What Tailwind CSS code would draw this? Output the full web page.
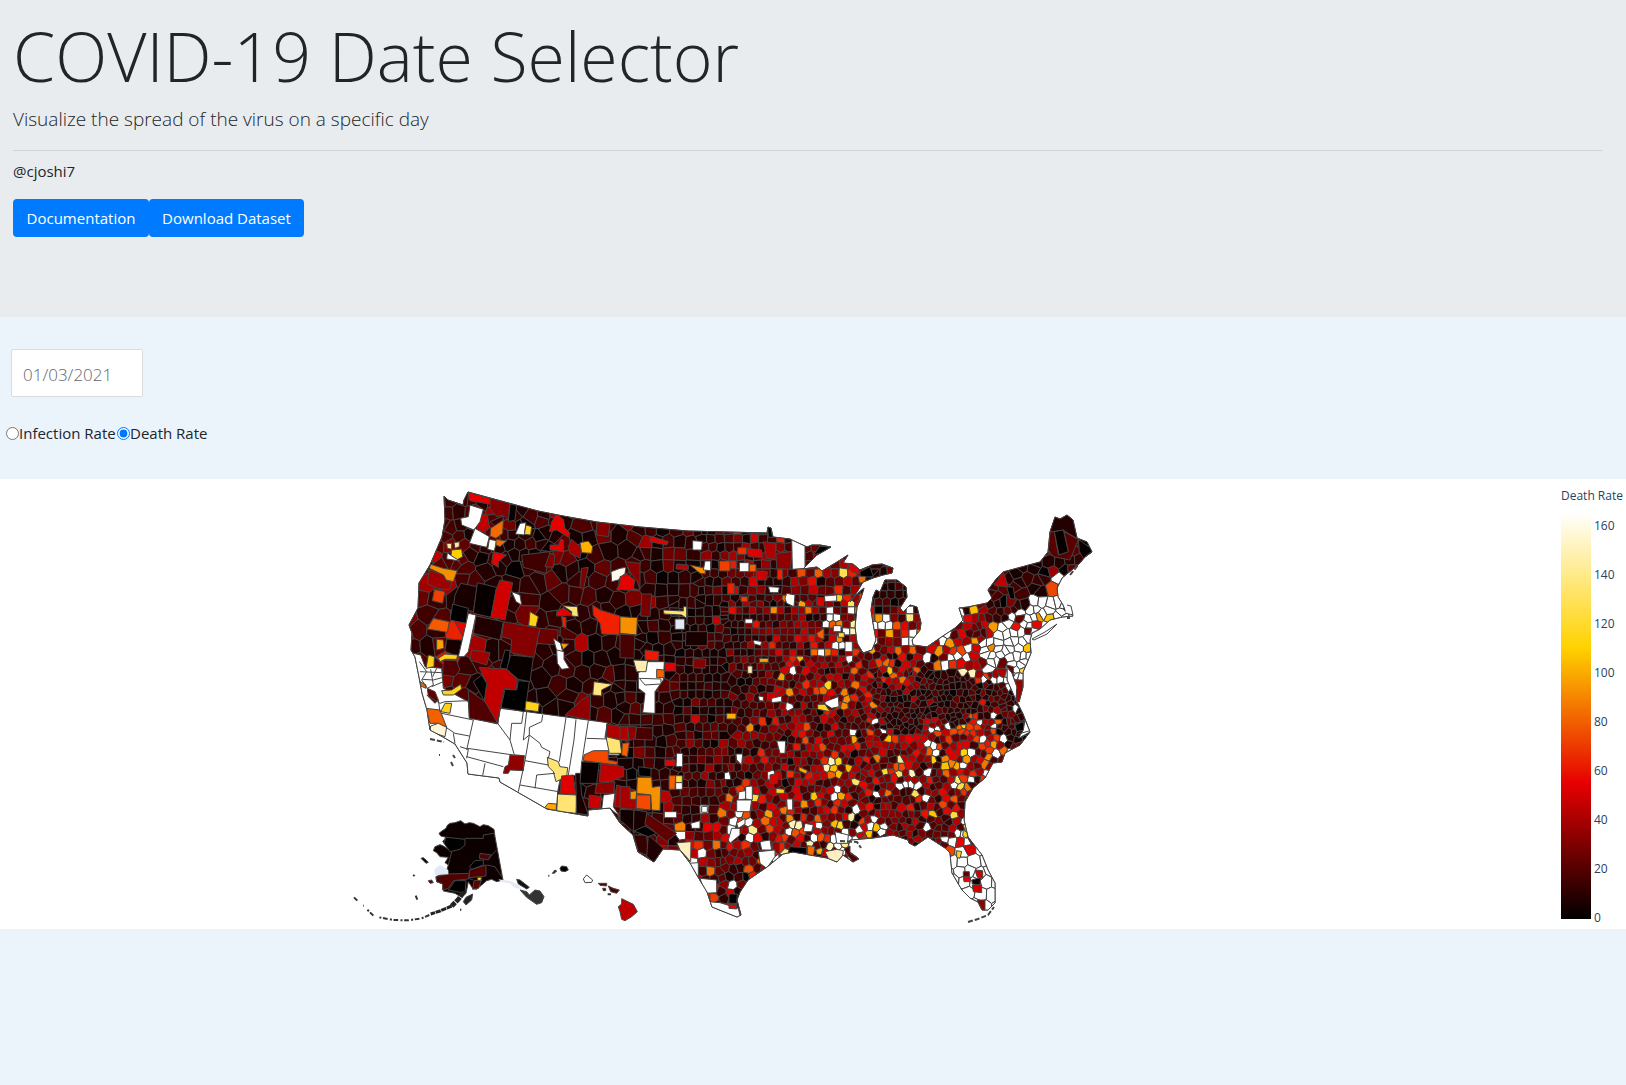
<!DOCTYPE html>
<html lang="en">
<head>
<meta charset="utf-8">
<title>COVID-19 Date Selector</title>
<script src="https://cdn.jsdelivr.net/npm/@tailwindcss/browser@4"></script>
</head>
<body class="min-h-screen bg-[#ebf3fb] font-['Open_Sans',sans-serif] text-base text-[#212529]">
<header class="h-[317px] bg-[#e9ecef] pt-3 pr-6 pl-[13px]">
  <h1 class="text-[68px] leading-[88px] font-light whitespace-nowrap">COVID-19 Date Selector</h1>
  <p class="mt-1 text-[19px] leading-[30px] font-light">Visualize the spread of the virus on a specific day</p>
  <hr class="mt-4 border-t border-[#cfd2d5]">
  <p class="mt-2 text-[15px] leading-6">@cjoshi7</p>
  <div class="mt-4 flex">
    <button type="button" class="h-[38px] w-[136px] rounded bg-[#007bff] text-[15px] whitespace-nowrap text-white">Documentation</button>
    <button type="button" class="h-[38px] w-[155px] rounded bg-[#007bff] text-[15px] whitespace-nowrap text-white">Download Dataset</button>
  </div>
</header>
<main>
  <section class="h-[162px] pt-8" aria-label="Filters">
    <input type="text" aria-label="Date" value="01/03/2021" class="ml-[11px] block h-12 w-[132px] rounded-xs border border-[#dbdbdb] bg-white px-[11px] pt-0.5 text-[17px] font-light text-[#666]">
    <div class="mt-6 ml-1.5 flex h-6 items-center text-[15px]">
      <input id="infection" name="rate" type="radio" class="size-[13px]"><label for="infection" class="w-[98px] whitespace-nowrap">Infection Rate</label>
      <input id="death" name="rate" type="radio" checked class="size-[13px]"><label for="death" class="whitespace-nowrap">Death Rate</label>
    </div>
  </section>
  <section class="flex h-[450px] bg-white" aria-label="Death rate by county">
    <div class="flex flex-1 justify-center">
      <svg id="map" class="h-[450px] w-[760px]" viewBox="343 479 760 450" role="img" aria-label="Death rate in the counties of the United States" stroke="#444" stroke-linejoin="round"></svg>
    </div>
    <div class="flex w-[180px] flex-col items-end pt-[7px] text-xs text-[#2a3f5f]">
      <div class="w-[65px] leading-5 whitespace-nowrap">Death Rate</div>
      <div class="mt-1 flex w-[65px] pt-0.5">
        <div class="h-[407px] w-[30px] bg-[linear-gradient(to_top,#000,#e60000_33.3%,#ffd200_66.7%,#fff)]"></div>
        <ol class="mt-2 ml-[3px] flex h-[404px] flex-col justify-between leading-3">
          <li>160</li><li>140</li><li>120</li><li>100</li><li>80</li><li>60</li><li>40</li><li>20</li><li>0</li>
        </ol>
      </div>
    </div>
  </section>
</main>
<script>
const NS = 'http://www.w3.org/2000/svg';
const map = document.getElementById('map');
let seed = 20210103;
const rnd = () => { seed = (seed * 1664525 + 1013904223) >>> 0; return seed / 4294967296; };
function add(parent, tag, attrs) {
  const e = document.createElementNS(NS, tag);
  for (const k in attrs) e.setAttribute(k, attrs[k]);
  parent.appendChild(e);
  return e;
}
const outline = "444,496 448,500 463,505 464,500 468,492 490,498 538,511 563,516 597,522 640,527 688,531 767,533 768,527 771,528 773,537 790,539 794,541 807,547 812,545 820,545 831,547 817,555 803,569 817,567 822,571 837,562 848,555 843,563 853,564 860,570 872,565 882,564 893,568 892,573 883,575 873,578 863,582 857,592 850,602 857,594 864,588 861,598 857,607 855,627 857,643 863,653 872,650 876,640 873,623 871,610 873,597 876,590 880,592 885,580 897,580 906,587 907,597 900,608 903,612 910,605 917,607 921,623 920,630 912,640 913,645 927,647 940,638 955,628 963,620 959,608 968,607 987,603 992,598 988,590 997,578 1003,572 1040,562 1048,552 1050,532 1055,517 1060,519 1067,515 1073,520 1077,538 1087,542 1092,552 1085,557 1078,565 1068,573 1062,578 1057,588 1058,597 1063,605 1066,613 1071,613 1073,616 1062,617 1050,620 1040,629 1032,633 1030,640 1031,653 1027,663 1023,672 1023,687 1019,702 1016,700 1017,687 1012,673 1007,667 1007,680 1015,698 1023,714 1030,732 1020,745 1005,753 1002,762 993,763 985,778 973,788 965,802 964,820 968,837 982,855 988,870 995,883 995,903 988,910 982,910 978,902 970,898 962,890 952,873 950,853 945,848 928,837 915,846 909,843 908,840 893,835 873,838 850,840 847,850 858,858 853,862 843,855 837,862 827,858 810,855 793,852 783,854 767,867 748,880 740,892 737,900 741,915 737,917 712,907 707,892 698,877 690,863 680,850 663,849 654,862 638,852 633,835 620,823 610,808 588,810 588,816 547,809 500,782 499,778 468,774 467,763 455,744 443,737 430,730 427,710 422,693 419,677 415,657 411,650 412,633 409,625 418,608 419,583 430,565 442,537 445,520";
const defs = add(map, 'defs', {});
add(add(defs, 'clipPath', { id: 'land' }), 'polygon', { points: outline });
add(map, 'polygon', { points: outline, fill: '#200000' });
const land = add(map, 'g', { 'clip-path': 'url(#land)' });

// County seeds: [x0, x1, y0, y1, spacing, jitter]; the first band that holds a point wins
const bands = [
  [868, 1015, 672, 728, 5.8, .8], [1000, 1100, 505, 600, 10, .8], [945, 1000, 845, 920, 11, .5],
  [868, 925, 575, 645, 7.8, .15], [980, 1080, 600, 672, 7.4, .8], [925, 1100, 560, 672, 7.8, .6],
  [860, 1100, 640, 850, 6.8, .65], [780, 870, 660, 870, 7, .5], [725, 870, 600, 670, 7, .2],
  [700, 870, 500, 605, 8.6, .3], [675, 730, 600, 780, 8.2, .2], [720, 800, 670, 930, 7.8, .45],
  [675, 800, 770, 930, 8.8, .25], [640, 710, 500, 680, 12, .3], [620, 690, 670, 930, 11, .25],
  [570, 645, 500, 930, 15, .5], [400, 580, 485, 560, 11, .8], [400, 580, 560, 830, 16, .7]
];
const within = (b, x, y) => x >= b[0] && x < b[1] && y >= b[2] && y < b[3];
const pts = [];
bands.forEach((b, i) => {
  const grid = b[5] <= .3;
  let row = 0;
  for (let y = b[2] + b[4] / 2; y < b[3]; y += b[4], row++) {
    const shift = grid ? Math.floor(row / 3) * .37 % 1 : row % 2 ? .7 : .3;
    for (let x = b[0] + b[4] * shift; x < b[1]; x += b[4]) {
      const px = x + (rnd() - .5) * b[4] * b[5], py = y + (rnd() - .5) * b[4] * b[5] * (grid ? .5 : 1);
      if (!bands.slice(0, i).some(q => within(q, px, py))) pts.push([px, py, b[4]]);
    }
  }
});
// Regional rates: [x, y, mean, share above the scale]
const regions = [
  [460, 510, 24, 0], [440, 590, 22, 0], [500, 570, 10, 0], [550, 620, 16, 0], [600, 560, 8, 0], [560, 530, 12, 0],
  [570, 680, 9, 0], [660, 540, 12, 0], [700, 570, 9, 0], [660, 640, 6, 0], [700, 680, 9, 0], [640, 740, 9, 0],
  [740, 560, 24, 0], [780, 540, 34, 0], [770, 590, 26, .01], [820, 580, 38, .01], [840, 565, 36, 0],
  [850, 610, 64, .12], [850, 640, 72, .2], [780, 630, 32, .02], [820, 650, 42, .03], [740, 660, 14, .01],
  [800, 680, 36, .03], [840, 690, 44, .03], [720, 720, 15, 0], [760, 740, 30, .01], [700, 790, 16, .01],
  [720, 770, 17, .01], [770, 780, 36, .02], [745, 800, 55, .12], [720, 840, 34, .02], [750, 860, 38, .03], [735, 835, 42, .08],
  [810, 750, 38, .02], [820, 800, 48, .05], [800, 850, 60, .1], [840, 840, 75, .16], [850, 770, 50, .03], [890, 750, 46, .06],
  [880, 790, 36, .05], [900, 780, 56, .1], [910, 810, 26, .01], [930, 830, 26, .02], [950, 800, 38, .04], [960, 770, 62, .08], [940, 745, 55, .15],
  [980, 750, 64, .06], [990, 735, 62, .08], [1015, 720, 14, .03], [870, 710, 30, .02], [900, 710, 12, 0], [950, 700, 12, 0],
  [990, 705, 16, .01], [925, 690, 18, .01], [890, 575, 8, 0], [890, 600, 10, 0], [895, 622, 62, .35], [912, 620, 68, .35],
  [880, 655, 58, .12], [900, 675, 46, .08], [935, 655, 70, .18], [950, 645, 85, .3], [965, 630, 28, .02], [980, 615, 34, .04],
  [985, 630, 55, .1], [970, 655, 85, .18], [995, 650, 90, .88], [1010, 640, 90, .94], [1025, 620, 70, .6], [1050, 605, 90, .8], [1010, 660, 80, .8],
  [1010, 600, 16, .05], [1015, 580, 12, 0], [1035, 580, 9, 0], [1050, 590, 60, .3], [1060, 550, 14, 0], [970, 860, 80, .97],
  [970, 885, 80, .97], [970, 840, 70, .45], [870, 830, 60, .4], [890, 815, 28, .03], [940, 680, 14, 0]
];
const stops = [[0, 0, 0], [230, 0, 0], [255, 210, 0], [255, 255, 255]];
function color(v) {
  const t = Math.min(v / 165, 1) * 3, i = Math.min(Math.floor(t), 2), f = t - i;
  return 'rgb(' + stops[i].map((c, k) => Math.round(c + (stops[i + 1][k] - c) * f)).join() + ')';
}
function rate(x, y) {
  let best = 1e9, r;
  for (const q of regions) {
    const d = Math.hypot(q[0] - x, q[1] - y) + rnd() * 10;
    if (d < best) { best = d; r = q; }
  }
  if (rnd() < r[3]) return 165;
  return Math.min((-Math.log(1 - rnd()) * .6 + rnd() * .5) * r[2] + rnd() * 6, 150);
}
// Voronoi cell of each seed, cut from a square by the bisectors with its neighbours
for (const p of pts) {
  const s = p[2] * 1.6;
  let poly = [[p[0] - s, p[1] - s], [p[0] + s, p[1] - s], [p[0] + s, p[1] + s], [p[0] - s, p[1] + s]];
  for (const q of pts) {
    if (q === p || Math.abs(q[0] - p[0]) > s * 2 || Math.abs(q[1] - p[1]) > s * 2) continue;
    const nx = q[0] - p[0], ny = q[1] - p[1], c = (q[0] * q[0] + q[1] * q[1] - p[0] * p[0] - p[1] * p[1]) / 2;
    const out = [];
    for (let i = 0; i < poly.length; i++) {
      const a = poly[i], b = poly[(i + 1) % poly.length];
      const da = a[0] * nx + a[1] * ny - c, db = b[0] * nx + b[1] * ny - c;
      if (da <= 0) out.push(a);
      if ((da < 0) !== (db < 0)) { const t = da / (da - db); out.push([a[0] + (b[0] - a[0]) * t, a[1] + (b[1] - a[1]) * t]); }
    }
    poly = out;
  }
  add(land, 'polygon', { points: poly.map(v => v[0].toFixed(1) + ',' + v[1].toFixed(1)).join(' '), fill: color(rate(p[0], p[1])) });
}
// Larger counties, in sheets of thirds of a pixel: "fill|points"
function sheet(parent, x, y, list) {
  const g = add(parent, 'g', { transform: `translate(${x} ${y}) scale(.33333)`, 'stroke-width': 3 });
  list.trim().split('\n').forEach(l => { const [fill, points] = l.trim().split('|'); add(g, 'polygon', { fill, points }); });
  return g;
}
sheet(land, 390, 480, `
#e60000|235,37 300,55 298,72 240,62
#850000|300,55 360,70 355,120 340,105 320,110 300,85
#080000|360,72 380,76 375,120 355,125
#fff|240,75 280,88 270,125 252,150 215,135 212,115 235,110
#fff|255,145 298,170 290,202 238,190
#fffaf0|298,178 320,182 313,213 293,208
#300000|300,125 340,108 338,122 315,138
#f56a00|340,120 338,160 318,175 300,168 302,145
#f56a00|318,178 350,183 330,200 318,195
#fff|390,130 408,128 403,165 376,162
#ffd21a|408,135 425,140 422,165 403,163
#e60000|500,103 520,118 525,145 540,160 535,172 500,150 478,155 485,125
#e60000|480,195 505,195 512,178 520,180 520,215 480,210
#a80000|545,178 575,205 570,235 540,220 535,200
#ffb000|570,188 595,183 608,200 605,220 575,218
#850000|620,125 660,130 655,170 620,165
#850000|705,245 750,250 750,330 740,300 725,285
#fffaf0|663,275 690,265 708,262 705,280 685,300 665,305
#e60000|690,290 710,282 735,300 730,325 745,333 680,328 690,310
#f79000|122,253 160,265 202,272 190,305 168,300 160,285 118,265
#a00000|118,270 160,285 168,300 185,310 178,330 140,325 112,310
#f04000|133,328 165,335 158,370 127,362
#180000|212,310 262,320 250,395 190,380 195,345
#080000|262,308 320,322 303,412 250,400
#d00000|330,300 368,308 345,420 303,412 318,330
#000|188,372 235,385 228,430 180,420
#400000|395,225 480,215 468,280 400,262
#800000|480,220 495,225 490,262 465,260
#e60000|310,215 350,225 325,245 325,262 305,250
#800000|575,265 595,262 580,330 570,320
#200000|258,408 340,425 330,480 250,460
#850000|342,425 450,445 432,533 362,518 365,478 335,470
#6a0000|450,445 505,450 500,495 440,490
#fff|235,400 258,405 235,515 222,530 205,530
#f55a00|130,415 178,425 172,457 112,447
#ffa000|140,478 160,480 162,505 140,510
#ffe9a0|170,190 185,190 185,208 172,205
#ffe9a0|192,188 208,185 208,200 195,205
#ffd000|185,210 215,207 218,230 200,240 183,228
#fff|172,218 185,228 210,243 170,237
#fff|365,335 390,345 395,375 378,365
#ffd21a|420,395 445,410 438,440 416,437
#e60000|500,395 520,383 550,405 500,408
#ffe373|518,377 562,380 565,410 545,408 545,395
#f02000|515,410 528,412 528,443 518,440
#f02000|608,375 630,390 690,408 688,465 635,462 630,430 610,405
#f79000|690,410 742,413 740,465 690,460
#fff|490,475 512,490 520,525 505,530
#ffa000|512,490 537,492 520,508`);
const sw = sheet(land, 390, 640, `
#fff|60,38 92,45 105,80 155,85 160,145 235,185 238,233 323,252 330,205 410,215 652,248 645,292 690,345 585,345 575,400 540,410 510,420 503,455 500,515 460,505 320,430 230,410 190,320 115,275 95,180 80,100
#fff|500,30 522,35 522,58 538,85 515,88 502,70
#a00000|245,30 300,38 290,75 240,60
#000|345,30 360,32 355,88 330,84
#090000|362,45 430,52 420,125 385,118 350,88
#500000|160,60 200,62 210,90 195,110 158,105
#c00000|268,82 350,88 382,118 378,150 342,145 323,250 283,185 290,130
#500000|235,150 285,185 323,250 238,235
#000|250,125 275,105 290,130 283,182
#000|345,148 380,150 385,122 418,125 405,215 333,203
#900000|525,225 575,180 602,165 600,240
#ffd21a|408,183 448,190 445,215 405,210
#ffe580|612,125 668,133 635,150 635,168 608,165
#ffecb0|732,60 772,62 768,97 740,95
#ffd21a|145,55 165,42 203,45 200,58 165,58 150,65
#ffd21a|115,45 133,50 132,80 108,85
#ffd21a|155,152 185,150 212,133 215,147 190,165 160,165
#ffd21a|165,190 185,190 180,220 152,215
#f56000|108,205 150,210 170,262 145,250 120,250
#fff5d8|122,258 145,250 170,262 165,290 120,275
#600000|112,145 135,155 145,180 135,190 115,170
#f56000|90,125 108,135 108,145 92,138
#900000|360,345 403,347 400,392 360,390 355,400 340,400 345,380 355,375
#ffe373|472,352 505,365 510,380 533,383 530,410 498,425 490,395 475,380
#e00000|515,408 550,405 557,465 510,460
#ffe373|503,462 560,465 558,520 500,515
#ffa800|475,490 500,492 498,512 462,505
#180000|557,400 570,400 575,465 595,525 560,520
#080000|575,365 628,368 620,430 570,430
#f34a00|582,345 610,332 655,332 655,360 683,365 680,375 580,362
#b00000|650,252 710,262 715,305 650,290
#ffe373|648,290 690,300 695,340 658,340
#f56000|697,310 718,308 712,350 695,345
#c00000|632,370 700,380 700,410 660,425 628,425
#900000|620,430 675,425 670,460 615,460
#c80000|598,465 635,470 630,508 595,503
#fff|640,465 675,460 670,500 690,530 660,505 635,508
#a80000|680,435 735,450 730,505 675,500
#f79000|745,412 780,412 780,460 720,480 720,455 742,455
#f34a00|740,463 780,463 780,510 738,508`);
add(sw, 'path', { fill: 'none', d: 'M155,220L250,240L230,330M168,262L195,280L238,288M232,325L370,345M330,205L323,250L360,300L373,345L403,347M400,215L395,250L365,250L360,300M230,350L340,380M285,370L278,407M410,215L400,300L418,285L405,362L385,455M458,225L455,245L418,262V285L450,310L455,322L480,335L475,355M528,233L508,365M558,238L552,300L535,405M595,242L575,370M590,295L650,297M405,362L475,375M435,445L440,405L495,400M390,435L505,455M90,95L155,98M97,118L130,120L160,112M125,140L160,125M110,165L150,190L165,185L235,182M88,65L110,95L95,120L112,145L130,135L122,88M140,85L128,110M145,180L150,215M190,280L195,310M210,320L235,328L230,355' });
sheet(land, 620, 500, `
#000|443,82 453,83 458,112 445,112
#fff|218,122 247,124 245,150 218,150
#fff|515,115 555,135 555,205 517,208
#000|580,165 600,138 632,142 600,160
#b00000|430,125 467,130 465,178 440,175
#900000|468,160 515,155 512,208 470,205
#f79000|210,195 258,205 255,222 240,220
#fff|255,183 272,183 272,212 250,210
#f04000|298,183 330,183 330,213 298,213
#fff|358,188 387,188 387,215 358,215
#f56000|388,193 408,193 408,215 388,215
#f03000|353,143 380,143 380,163 353,163
#e00000|380,145 425,150 425,172 385,170
#e00000|90,108 145,125 140,135 90,125
#c00000|170,192 205,195 205,208 168,207
#ffe373|130,330 190,333 190,320 200,320 200,355 185,345 132,342
#e2e9f5|165,357 194,357 194,388 165,388
#780000|65,282 95,282 90,350 62,348
#480000|0,403 45,405 42,475 0,473
#f01800|75,450 117,455 115,482 75,480
#fff|83,485 133,485 130,540 105,575 105,640 68,638 75,580 55,565 55,520
#fff|58,535 123,537 123,552 75,555
#ffecb0|40,480 83,482 78,515 50,515
#f56000|110,508 133,510 133,533 110,533
#e60000|135,488 167,490 165,513 135,513
#850000|222,475 258,478 255,505 220,503
#180000|198,395 262,395 262,437 196,437
#f02000|323,250 343,250 343,282 323,282
#d00000|408,213 442,215 440,240 408,240
#f04000|363,290 382,290 382,305 363,305
#f02000|472,208 488,208 488,238 472,238
#fff|445,260 478,262 475,278 450,278
#fff|500,280 525,285 522,320 500,310 495,295
#fff|613,288 650,285 650,303 615,305
#e00000|590,293 612,293 610,318 590,315
#f56000|590,400 612,385 612,418 595,412
#fff|375,357 398,357 398,370 375,370
#fff|400,420 425,425 422,437 402,432
#ffa000|418,475 445,475 445,487 418,487
#ffecb0|383,498 397,498 397,520 383,520
#ffb000|320,640 348,640 348,657 320,657
#fff|415,588 430,590 430,603 418,602
#fff|455,595 485,588 485,605 455,608
#fff|640,377 663,377 663,395 640,395
#ffd840|655,398 673,398 673,412 655,412
#fff|675,425 697,425 697,455 675,455
#fff|615,605 655,590 657,620 635,625 615,612
#ffd21a|593,613 615,613 630,635 593,628
#e00000|683,195 715,200 718,222 695,215`);
sheet(land, 620, 700, `
#fff|170,160 188,160 188,200 168,200
#e60000|135,180 165,180 165,197 135,197
#f56000|147,227 167,227 165,268 147,268
#ffd840|167,227 187,227 187,248 167,248
#fff|167,248 187,248 187,268 167,268
#b00000|0,80 22,80 25,120 0,118
#900000|22,80 50,80 45,115 28,122
#480000|50,82 98,84 98,120 45,118
#000|55,200 93,205 93,230 57,228
#f79000|52,232 95,232 97,262 122,258 120,332 95,330 92,285 50,280
#f34a00|50,285 92,285 92,330 48,325
#f79000|30,275 50,272 48,298 30,298
#a80000|0,260 30,260 30,298 48,300 48,328 0,325
#100000|0,328 42,330 40,395 0,360
#180000|42,330 80,335 78,378 40,400
#350000|80,405 40,405 55,455 85,468
#200000|85,405 130,445 103,490 80,468
#600000|80,340 170,400 140,425 110,400 75,372
#000|42,393 75,378 110,400 85,410
#ffefc0|170,428 213,425 212,485 180,450
#fff|212,370 240,362 240,385 215,385
#fff|133,335 170,335 170,353 133,353
#fff|245,319 262,319 262,337 245,337
#fff|240,535 290,540 290,578 255,580
#fff|205,490 235,488 235,528 220,520
#fff|265,605 300,608 355,625 362,655 315,645 270,630
#000|327,582 352,582 350,610 327,610
#e60000|327,613 350,613 350,627 327,625
#fff|357,275 377,272 377,297 354,300
#fff|377,260 397,258 397,300 377,297
#fff|350,300 395,300 390,335 350,335
#fff|350,370 375,355 375,372 355,385
#fff|335,385 360,385 360,405 330,430 325,420
#fff|470,123 497,123 495,160 480,160
#fff|348,162 368,162 365,195 350,180
#fff|500,297 518,297 518,330 502,330
#ffa800|537,200 563,212 558,222 537,212
#ffd21a|468,265 493,268 493,280 468,280
#fff|420,425 450,420 455,450 425,450
#fff|415,455 465,450 465,470 440,505 420,490
#000|508,440 560,443 560,465 505,462
#f56a00|563,437 585,440 580,468 562,464
#ffefc0|615,455 650,448 670,452 665,485 630,485
#fff|555,370 580,375 575,395 550,395
#fff|645,395 685,405 683,430 650,430
#e00000|450,225 472,220 472,250 450,250`);
sheet(land, 840, 500, `
#c00000|490,215 505,262 462,255
#000|500,260 520,262 525,298 510,295
#240000|645,45 680,40 700,60 715,118 685,100 670,90 640,95 625,100
#580000|630,95 643,95 655,165 685,155 672,95 690,105 715,118 690,180 640,170 625,150
#080000|643,95 670,90 685,155 657,165
#080000|715,118 760,150 730,175 718,155
#000|60,215 90,200 100,230 60,232
#600000|500,495 520,500 520,555 505,540
#a00000|525,540 550,540 545,610 525,600
#f56a00|55,228 78,230 75,250 58,248`);
sheet(land, 840, 700, `
#600000|370,515 388,515 388,530 370,530
#e60000|370,530 390,530 390,545 372,545
#d00000|405,510 428,512 428,535 412,532
#180000|395,540 422,533 420,555 397,552
#d00000|397,555 425,555 425,578 400,575
#900000|412,600 435,600 435,632 420,630
#080000|525,75 550,65 555,90 530,95
#fff|555,60 572,95 535,115 550,90
#ffd21a|350,452 365,455 360,475 350,472
#ffd21a|370,390 385,400 380,415 368,408`);
add(map, 'polygon', { points: outline, fill: 'none' });
// Islands, the Keys and the eastern capes
add(map, 'path', { fill: '#fff', d: 'M1032,639L1045,632L1057,624L1047,634L1034,640ZM1065,613L1073,615L1071,606L1067,605M1018,734L1029,731' });
add(map, 'path', { fill: 'none', 'stroke-width': 2, 'stroke-dasharray': '5 2', d: 'M968,922L978,919L988,915L994,907M840,841L857,842L861,848M430,739L444,742M439,755h1M453,755l2,3M451,762l2,4M1067,618h3M1070,575l8,-10' });
add(map, 'path', { fill: '#500000', d: 'M844,849L850,846L850,853L859,859L853,862L848,856Z' });
const ak = sheet(map, 340, 810, `
#0c0000|297,70 307,62 318,55 322,46 330,40 345,38 362,32 375,42 388,38 400,40 420,50 430,44 445,47 462,58 465,80 489,210 470,215 455,208 440,212 425,225 410,238 398,235 385,215 378,250 365,262 345,250 310,243 316,230 308,222 290,215 288,200 305,193 325,193 320,180 325,165 315,158 325,142 300,140 290,128 280,122 285,110 300,104 310,108 325,118 318,105 308,95 318,82 302,78
#000|318,82 350,85 375,88 375,105 360,118 330,125 312,100
#500000|288,200 325,192 388,190 385,207 340,212 325,235 308,240 308,222 290,215
#000|345,212 378,212 375,250 350,245 325,240
#500000|388,180 438,165 438,198 388,203
#000|388,170 405,152 430,150 430,165 395,178
#500000|420,130 455,135 445,150 418,145
#600000|402,212 425,210 415,235 398,238
#ffd21a|413,202 425,202 422,212 412,210
#222|378,262 398,252 395,270 378,285 370,275
#111|530,208 540,210 568,232 560,237 535,222
#333|540,240 560,245 568,255 585,240 600,243 612,260 605,278 590,283 560,262
#000|243,145 250,143 265,157 258,160
#600000|265,212 275,210 280,218 270,220
#000|660,175 665,168 680,170 685,180 675,185 663,183
#222|637,190 645,180 650,183 643,190
#fff|730,207 740,195 758,210 755,217 735,218
#500000|775,220 800,220 800,228 780,226
#400000|788,235 797,235 797,242 790,242
#500000|805,228 820,235 838,240 830,250 812,245
#c00000|845,266 880,283 892,305 875,320 855,332 845,328 840,305 835,290 845,282`);
add(ak, 'path', { fill: '#e2e9f5', stroke: 'none', d: 'M285,195L283,178L300,165L325,180L325,193ZM475,208L510,213L535,225L545,238L525,234L510,220L485,216Z' });
add(ak, 'path', { fill: 'none', d: 'M335,125L325,165M375,85L430,85V75L462,70M440,165L465,170L485,200M445,145L470,120M385,205L400,210' });
add(ak, 'path', { fill: 'none', stroke: '#222', 'stroke-width': 14, 'stroke-dasharray': '18 3', d: 'M372,245L355,268L335,288' });
add(ak, 'path', { fill: 'none', stroke: '#222', 'stroke-width': 9, 'stroke-dasharray': '16 2', d: 'M335,288L300,303L272,312' });
add(ak, 'path', { fill: 'none', stroke: '#333', 'stroke-width': 6, 'stroke-dasharray': '14 5 6 7', d: 'M268,315L245,325L205,331L160,330L112,321M100,317L80,297M70,287h2M42,262l12,12M219,195l5,3M227,257l5,12M625,197h3M360,299h4M803,253h10' });
</script>
</body>
</html>
